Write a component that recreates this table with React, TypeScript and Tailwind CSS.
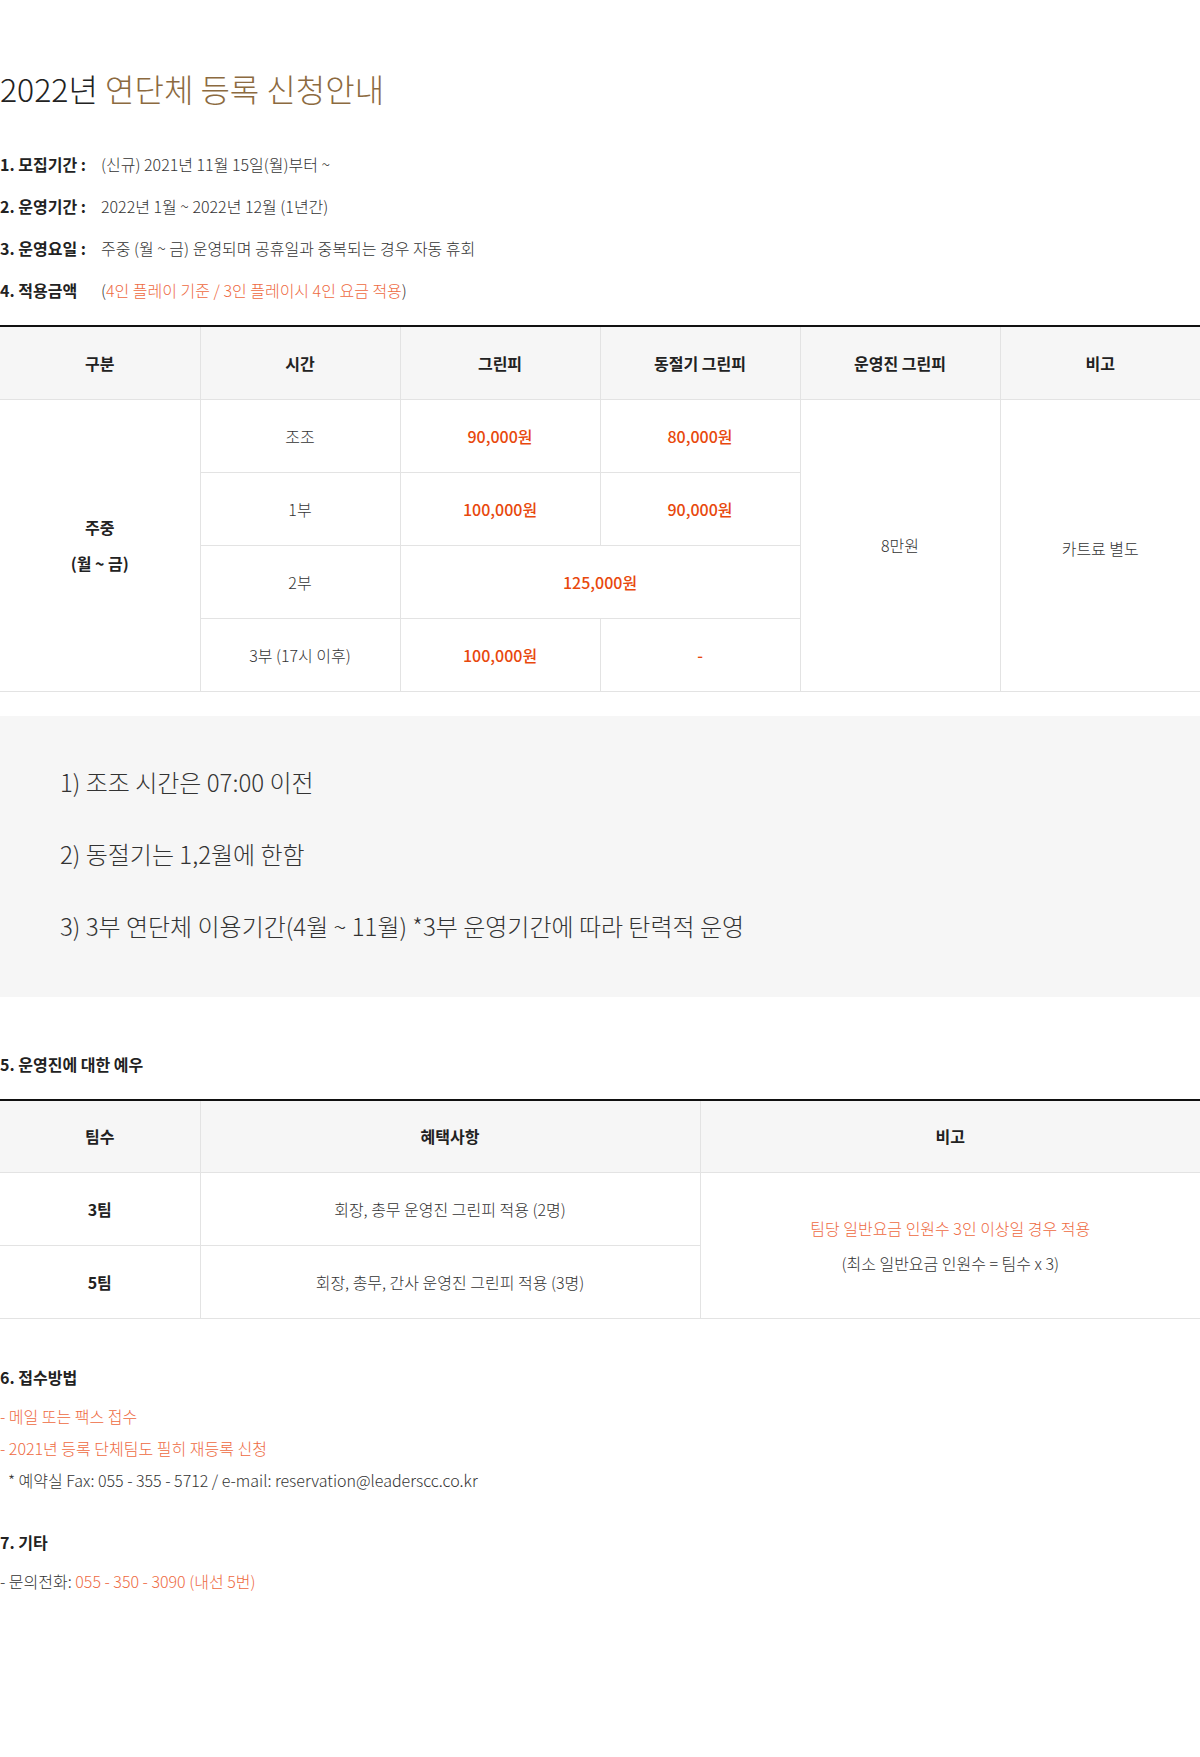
const th =
  "h-[73px] border-b border-r border-[#e3e3e3] bg-[#f6f6f6] text-center text-[16px] font-bold text-[#222]";
const td = "h-[73px] border-b border-r border-[#e3e3e3] text-center text-[16px]";
const price = "text-[#e8480c] font-medium";

const info = [
  { label: "1. 모집기간 :", value: "(신규) 2021년 11월 15일(월)부터 ~" },
  { label: "2. 운영기간 :", value: "2022년 1월 ~ 2022년 12월 (1년간)" },
  { label: "3. 운영요일 :", value: "주중 (월 ~ 금) 운영되며 공휴일과 중복되는 경우 자동 휴회" },
];

const notes = [
  "1) 조조 시간은 07:00 이전",
  "2) 동절기는 1,2월에 한함",
  "3) 3부 연단체 이용기간(4월 ~ 11월) *3부 운영기간에 따라 탄력적 운영",
];

const App = () => {
  return (
    <div className="w-[1200px] bg-white pb-[150px] font-['Noto_Sans_CJK_KR','Noto_Sans',sans-serif] text-[#333]">
      <h1 className="pt-[68px] text-[32px] font-light leading-[40px] text-[#222]">
        2022년 <span className="text-[#8c6a40]">연단체 등록 신청안내</span>
      </h1>

      <ul className="mt-[35px]">
        {info.map((item) => (
          <li key={item.label} className="flex text-[16px] leading-[42px]">
            <strong className="w-[101px] font-bold text-[#222]">{item.label}</strong>
            <span className="font-light text-[#333]">{item.value}</span>
          </li>
        ))}
        <li className="flex text-[16px] leading-[42px]">
          <strong className="w-[101px] font-bold text-[#222]">4. 적용금액</strong>
          <span className="font-light text-[#333]">
            (<span className="text-[#ee6a3f]">4인 플레이 기준 / 3인 플레이시 4인 요금 적용</span>)
          </span>
        </li>
      </ul>

      <table className="mt-[14px] w-full table-fixed border-collapse border-t-2 border-t-[#111]">
        <colgroup>
          <col className="w-[200px]" />
          <col className="w-[200px]" />
          <col className="w-[200px]" />
          <col className="w-[200px]" />
          <col className="w-[200px]" />
          <col className="w-[200px]" />
        </colgroup>
        <thead>
          <tr>
            <th className={th}>구분</th>
            <th className={th}>시간</th>
            <th className={th}>그린피</th>
            <th className={th}>동절기 그린피</th>
            <th className={th}>운영진 그린피</th>
            <th className={`${th} border-r-0`}>비고</th>
          </tr>
        </thead>
        <tbody className="font-light">
          <tr>
            <td rowSpan={4} className={`${td} font-bold leading-[36px] text-[#222]`}>
              주중
              <br />
              (월 ~ 금)
            </td>
            <td className={td}>조조</td>
            <td className={`${td} ${price}`}>90,000원</td>
            <td className={`${td} ${price}`}>80,000원</td>
            <td rowSpan={4} className={td}>8만원</td>
            <td rowSpan={4} className={`${td} border-r-0 pt-[6px]`}>카트료 별도</td>
          </tr>
          <tr>
            <td className={td}>1부</td>
            <td className={`${td} ${price}`}>100,000원</td>
            <td className={`${td} ${price}`}>90,000원</td>
          </tr>
          <tr>
            <td className={td}>2부</td>
            <td colSpan={2} className={`${td} ${price}`}>125,000원</td>
          </tr>
          <tr>
            <td className={td}>3부 (17시 이후)</td>
            <td className={`${td} ${price}`}>100,000원</td>
            <td className={`${td} ${price}`}>-</td>
          </tr>
        </tbody>
      </table>

      <div className="mt-[24px] flex flex-col gap-[36px] bg-[#f6f6f6] pt-[48px] pb-[53px] pl-[60px]">
        {notes.map((n) => (
          <p key={n} className="text-[24px] font-light leading-[36px] text-[#333]">
            {n}
          </p>
        ))}
      </div>

      <h2 className="mt-[55px] text-[16px] font-bold leading-[24px] text-[#222]">5. 운영진에 대한 예우</h2>

      <table className="mt-[23px] w-full table-fixed border-collapse border-t-2 border-t-[#111]">
        <colgroup>
          <col className="w-[200px]" />
          <col className="w-[500px]" />
          <col className="w-[500px]" />
        </colgroup>
        <thead>
          <tr>
            <th className={th}>팀수</th>
            <th className={th}>혜택사항</th>
            <th className={`${th} border-r-0`}>비고</th>
          </tr>
        </thead>
        <tbody className="font-light">
          <tr>
            <td className={`${td} font-bold text-[#222]`}>3팀</td>
            <td className={td}>회장, 총무 운영진 그린피 적용 (2명)</td>
            <td rowSpan={2} className={`${td} border-r-0 leading-[35px]`}>
              <span className="text-[#ee6a3f]">팀당 일반요금 인원수 3인 이상일 경우 적용</span>
              <br />
              (최소 일반요금 인원수 = 팀수 x 3)
            </td>
          </tr>
          <tr>
            <td className={`${td} font-bold text-[#222]`}>5팀</td>
            <td className={td}>회장, 총무, 간사 운영진 그린피 적용 (3명)</td>
          </tr>
        </tbody>
      </table>

      <h2 className="mt-[46px] text-[16px] font-bold leading-[24px] text-[#222]">6. 접수방법</h2>
      <ul className="mt-[11px] text-[16px] font-light leading-[32px]">
        <li className="text-[#ee6a3f]">- 메일 또는 팩스 접수</li>
        <li className="text-[#ee6a3f]">- 2021년 등록 단체팀도 필히 재등록 신청</li>
        <li className="pl-[8px] text-[#333]">* 예약실 Fax: 055 - 355 - 5712 / e-mail: reservation@leaderscc.co.kr</li>
      </ul>

      <h2 className="mt-[34px] text-[16px] font-bold leading-[24px] text-[#222]">7. 기타</h2>
      <p className="mt-[11px] text-[16px] font-light leading-[32px] text-[#333]">
        - 문의전화: <span className="text-[#ee6a3f]">055 - 350 - 3090 (내선 5번)</span>
      </p>
    </div>
  );
};

export default App;
